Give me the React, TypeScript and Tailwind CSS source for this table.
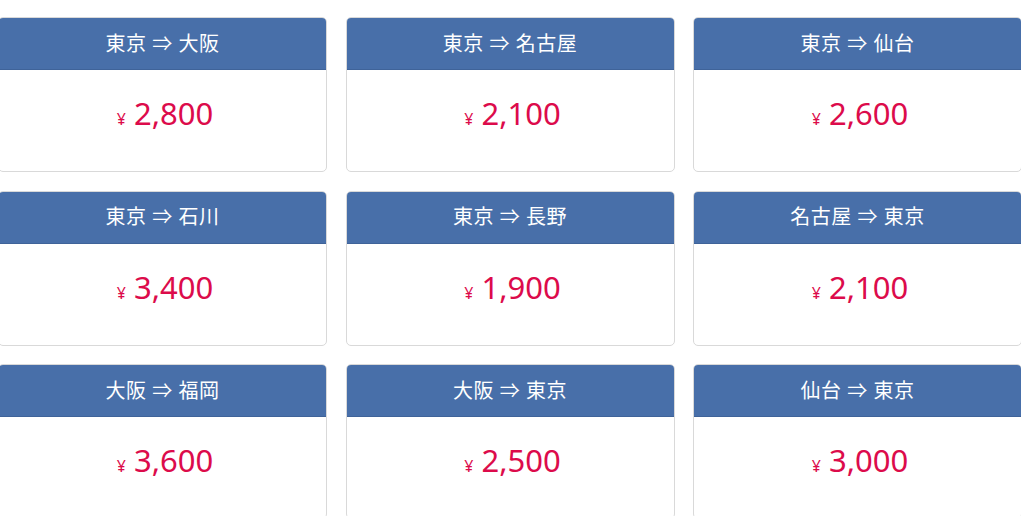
import React from 'react'

interface Fare {
  route: string
  price: string
}

const fares: Fare[] = [
  { route: '東京 ⇒ 大阪', price: '2,800' },
  { route: '東京 ⇒ 名古屋', price: '2,100' },
  { route: '東京 ⇒ 仙台', price: '2,600' },
  { route: '東京 ⇒ 石川', price: '3,400' },
  { route: '東京 ⇒ 長野', price: '1,900' },
  { route: '名古屋 ⇒ 東京', price: '2,100' },
  { route: '大阪 ⇒ 福岡', price: '3,600' },
  { route: '大阪 ⇒ 東京', price: '2,500' },
  { route: '仙台 ⇒ 東京', price: '3,000' },
]

export default function App() {
  return (
    <div
      className="min-h-screen bg-white overflow-hidden"
      style={{ fontFamily: '"Noto Sans", "Noto Sans CJK JP", sans-serif' }}
    >
      <div className="grid grid-cols-[329px_329px_329px] gap-x-[18.5px] gap-y-[18.5px] pt-[17px] ml-[-2px]">
        {fares.map((fare, i) => (
          <div
            key={i}
            className="h-[155px] rounded-[5px] border border-[#d9d9d9] overflow-hidden flex flex-col bg-white"
          >
            {/* route header */}
            <div className="h-[52px] bg-[#486fa9] flex items-center justify-center text-white text-[20px] tracking-[0.5px] border-b border-[#3f6399]">
              {fare.route}
            </div>
            {/* price */}
            <div className="flex-1 flex items-baseline justify-center pt-[28px] pl-[5px] text-[#dc0b4b]">
              <span className="text-[16px] mr-[8px]">¥</span>
              <span className="text-[31px] leading-none">{fare.price}</span>
            </div>
          </div>
        ))}
      </div>
    </div>
  )
}
